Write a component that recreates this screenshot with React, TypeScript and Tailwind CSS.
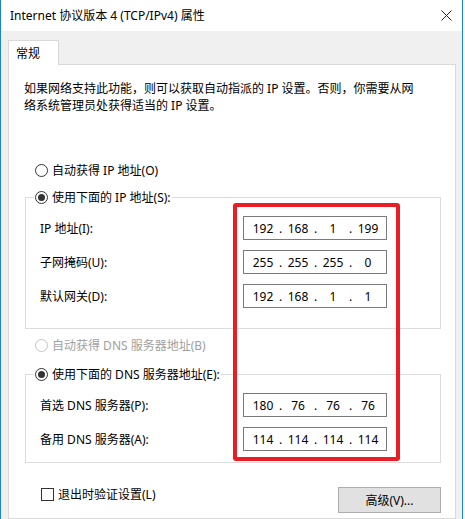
const font = "font-['Noto_Sans','Noto_Sans_CJK_SC',sans-serif]";

function Radio({ checked, disabled }: { checked?: boolean; disabled?: boolean }) {
  return (
    <span
      className={`flex h-[13px] w-[13px] items-center justify-center rounded-full border bg-white ${
        disabled ? "border-[#c4c4c4]" : "border-[#333333]"
      }`}
    >
      {checked && <span className="h-[7px] w-[7px] rounded-full bg-[#333333]" />}
    </span>
  );
}

function IpBox({ parts }: { parts: string[] }) {
  return (
    <div className="flex h-[24px] w-[144px] items-center border border-[#7a7a7a] bg-white pl-[7px] text-[12px]">
      {parts.map((p, i) => (
        <div key={i} className="flex items-center">
          <span className="w-[24px] text-center">{p}</span>
          {i < parts.length - 1 && <span className="w-[11px] text-center">.</span>}
        </div>
      ))}
    </div>
  );
}

function Row({ label, parts }: { label: string; parts: string[] }) {
  return (
    <div className="flex h-[24px] items-center">
      <span className="w-[203px]">{label}</span>
      <IpBox parts={parts} />
    </div>
  );
}

export default function App() {
  return (
    <div className="h-[519px] w-[465px] bg-white">
      <div
        className={`relative flex h-[519px] w-[463px] flex-col overflow-hidden border-x border-[#1883d7] text-[12px] leading-[17px] text-black ${font}`}
      >
        {/* title bar */}
        <div className="flex h-[31px] shrink-0 items-center justify-between bg-white pl-[9px] pr-[9px]">
          <span>Internet 协议版本 4 (TCP/IPv4) 属性</span>
          <svg width="11" height="11" viewBox="0 0 11 11" className="mr-[1px]">
            <path d="M0.5 0.5 L10.5 10.5 M10.5 0.5 L0.5 10.5" stroke="#222" strokeWidth="1" />
          </svg>
        </div>

        {/* body */}
        <div className="flex flex-1 flex-col bg-[#f0f0f0] pl-[7px] pr-[6px] pt-[9px]">
          <div className="relative z-10 -mb-px flex h-[25px] w-[51px] items-center border border-b-0 border-[#d9d9d9] bg-white pl-[7px]">
            常规
          </div>
          <div className="flex-1 border border-[#d9d9d9] bg-white pl-[15px] pt-[15px]">
            <p>
              如果网络支持此功能，则可以获取自动指派的 IP 设置。否则，你需要从网
              <br />
              络系统管理员处获得适当的 IP 设置。
            </p>

            <div className="mt-[48px] flex h-[17px] items-center gap-[4px] pl-[11px]">
              <Radio />
              <span>自动获得 IP 地址(O)</span>
            </div>

            <fieldset className="ml-px mt-[10px] w-[416px] border border-[#dcdcdc] pb-[20px]">
              <legend className="ml-[8px] flex h-[17px] items-center gap-[4px] px-px">
                <Radio checked />
                <span>使用下面的 IP 地址(S):</span>
              </legend>
              <div className="flex flex-col gap-[10px] pl-[14px] pt-[10px]">
                <Row label="IP 地址(I):" parts={["192", "168", "1", "199"]} />
                <Row label="子网掩码(U):" parts={["255", "255", "255", "0"]} />
                <Row label="默认网关(D):" parts={["192", "168", "1", "1"]} />
              </div>
            </fieldset>

            <div className="mt-[8px] flex h-[17px] items-center gap-[4px] pl-[11px] text-[#a0a0a0]">
              <Radio disabled />
              <span>自动获得 DNS 服务器地址(B)</span>
            </div>

            <fieldset className="ml-px mt-[12px] w-[416px] border border-[#dcdcdc] pb-[11px]">
              <legend className="ml-[8px] flex h-[17px] items-center gap-[4px] px-px">
                <Radio checked />
                <span>使用下面的 DNS 服务器地址(E):</span>
              </legend>
              <div className="flex flex-col gap-[10px] pl-[14px] pt-[10px]">
                <Row label="首选 DNS 服务器(P):" parts={["180", "76", "76", "76"]} />
                <Row label="备用 DNS 服务器(A):" parts={["114", "114", "114", "114"]} />
              </div>
            </fieldset>

            <div className="flex w-[417px] items-start justify-between">
              <div className="mt-[23px] flex h-[17px] items-center gap-[4px] pl-[17px]">
                <span className="h-[13px] w-[13px] border border-[#333333] bg-white" />
                <span>退出时验证设置(L)</span>
              </div>
              <button className="mt-[24px] flex h-[26px] w-[103px] items-center justify-center border border-[#adadad] bg-[#e1e1e1]">
                高级(V)...
              </button>
            </div>
          </div>
        </div>

        {/* red annotation box */}
        <div className="absolute left-[232px] top-[203px] h-[258px] w-[167px] rounded-[3px] border-4 border-[#ec1c24]" />
      </div>
    </div>
  );
}
